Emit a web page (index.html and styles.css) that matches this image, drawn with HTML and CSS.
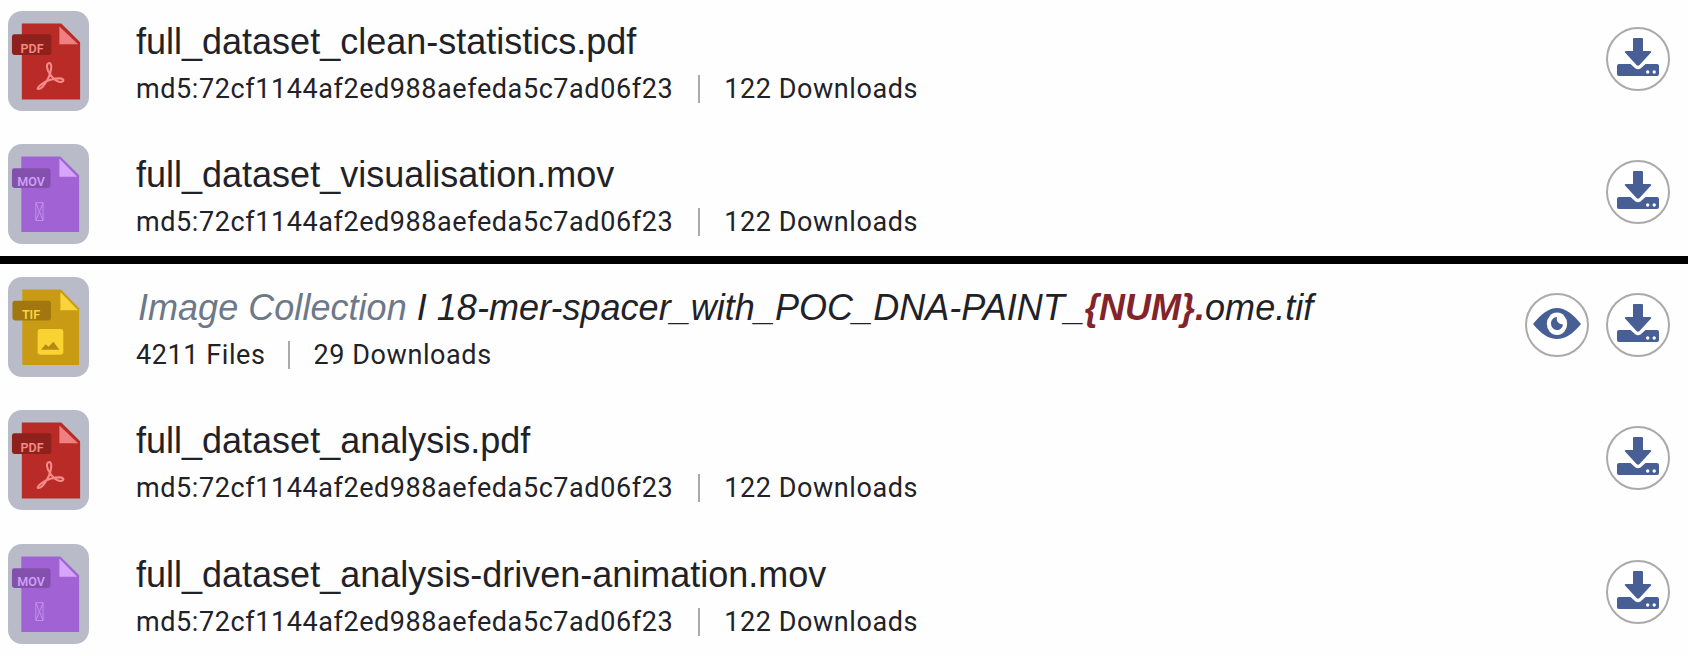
FILE: index.html
```
<!DOCTYPE html>
<html lang="en">
<head>
<meta charset="utf-8">
<title>Files</title>
<link rel="stylesheet" href="styles.css">
</head>
<body>
<svg class="defs" width="0" height="0">
  <symbol id="pdf" viewBox="0 0 82 100">
    <path fill="#b92b27" d="M14 12H54L73 31V89H14Z"/>
    <path fill="#f08080" d="M52 15L71 33H52Z"/>
    <rect x="4" y="23" width="40" height="21" rx="2.5" fill="#8f211c"/>
    <path d="M42 52C38 52 39 59 43 64C47 70 53 73 56 70C57 67 50 67 43 69C36 71 30 76 30 78C33 80 38 73 41 67C44 60 45 53 42 52Z" fill="none" stroke="#f58b87" stroke-width="2.1" stroke-linejoin="round"/>
  </symbol>
  <symbol id="mov" viewBox="0 0 82 100">
    <path fill="#a162d3" d="M13.500 12H53L72 31V88.500H13.500Z"/>
    <path fill="#d6a6fb" d="M52 14L70 32.500H52Z"/>
    <rect x="4" y="24" width="39" height="20" rx="2.500" fill="#8350ad"/>
    <path d="M28.200 58.800H35.500V76.800H28.200ZL35.500 76.800M35.500 58.800L28.200 76.800" fill="none" stroke="#c695ef" stroke-width=".9"/>
  </symbol>
  <symbol id="tif" viewBox="0 0 82 100">
    <path fill="#c99a13" d="M14.500 12H53.500L72 31V88.500H14.500Z"/>
    <path fill="#f8d43c" d="M53 14.500L71 33H53Z"/>
    <rect x="4.500" y="23.500" width="39" height="20" rx="2.500" fill="#a27710"/>
    <rect x="30" y="52" width="26" height="26" rx="2.500" fill="#f8d331"/>
    <path d="M33.500 73L38 67.500L41 70L46 65L52 73Z" fill="#b58a12"/>
  </symbol>
  <symbol id="download" viewBox="0 0 64 64">
    <path fill="#485f96" d="M28 11H36Q37 11 37 12V24H44Q46 24 45 25.500L33.500 38Q32 39.500 30.500 38L19 25.500Q18 24 20 24H27V12Q27 11 28 11Z"/>
    <path fill="#485f96" fill-rule="evenodd" d="M13 37H24.500L29.500 41.500Q32 43 34.500 41.500L39.500 37H51Q53 37 53 39V47Q53 49 51 49H13Q11 49 11 47V39Q11 37 13 37ZM40 45a1.700 1.700 0 1 0 3.400 0a1.700 1.700 0 1 0-3.400 0ZM46.500 45a1.700 1.700 0 1 0 3.400 0a1.700 1.700 0 1 0-3.400 0Z"/>
  </symbol>
  <symbol id="eye" viewBox="0 0 64 64">
    <path fill="#485f96" d="M8 31C16 21 24 15 32 15S48 21 56 31C48 41 40 46 32 46S16 41 8 31Z"/>
    <ellipse cx="32" cy="30.800" rx="10.200" ry="11.200" fill="#fff"/>
    <path fill="#485f96" d="M32 24Q30.500 30.500 38 31.500C37.500 35 35 37 32 37C28.500 37 26 34 26 30.500C26 27 28.500 24.200 32 24Z"/>
  </symbol>
</svg>

<main class="files">
  <article class="row">
    <div class="thumb pdf"><svg><use href="#pdf"/></svg><span class="tag">PDF</span></div>
    <div class="info">
      <h2 class="name">full_dataset_clean-statistics.pdf</h2>
      <div class="meta"><span>md5:72cf1144af2ed988aefeda5c7ad06f23</span><i class="rule"></i><span>122 Downloads</span></div>
    </div>
    <div class="actions"><button class="action" aria-label="Download"><svg><use href="#download"/></svg></button></div>
  </article>
  <article class="row">
    <div class="thumb mov"><svg><use href="#mov"/></svg><span class="tag">MOV</span></div>
    <div class="info">
      <h2 class="name">full_dataset_visualisation.mov</h2>
      <div class="meta"><span>md5:72cf1144af2ed988aefeda5c7ad06f23</span><i class="rule"></i><span>122 Downloads</span></div>
    </div>
    <div class="actions"><button class="action" aria-label="Download"><svg><use href="#download"/></svg></button></div>
  </article>
  <article class="row collection">
    <div class="thumb tif"><svg><use href="#tif"/></svg><span class="tag">TIF</span></div>
    <div class="info">
      <h2 class="name"><em><span class="kind">Image Collection</span> I 18-mer-spacer_with_POC_DNA-PAINT_<b class="num">{NUM}.</b>ome.tif</em></h2>
      <div class="meta"><span>4211 Files</span><i class="rule"></i><span>29 Downloads</span></div>
    </div>
    <div class="actions"><button class="action" aria-label="Preview"><svg><use href="#eye"/></svg></button><button class="action" aria-label="Download"><svg><use href="#download"/></svg></button></div>
  </article>
  <article class="row">
    <div class="thumb pdf"><svg><use href="#pdf"/></svg><span class="tag">PDF</span></div>
    <div class="info">
      <h2 class="name">full_dataset_analysis.pdf</h2>
      <div class="meta"><span>md5:72cf1144af2ed988aefeda5c7ad06f23</span><i class="rule"></i><span>122 Downloads</span></div>
    </div>
    <div class="actions"><button class="action" aria-label="Download"><svg><use href="#download"/></svg></button></div>
  </article>
  <article class="row last">
    <div class="thumb mov"><svg><use href="#mov"/></svg><span class="tag">MOV</span></div>
    <div class="info">
      <h2 class="name">full_dataset_analysis-driven-animation.mov</h2>
      <div class="meta"><span>md5:72cf1144af2ed988aefeda5c7ad06f23</span><i class="rule"></i><span>122 Downloads</span></div>
    </div>
    <div class="actions"><button class="action" aria-label="Download"><svg><use href="#download"/></svg></button></div>
  </article>
</main>
</body>
</html>
```
FILE: styles.css
```
* { box-sizing: border-box; }
body { margin: 0; background: #fefefe; color: #1f2227; }
.defs { display: block; height: 0; }
.files { height: 656px; overflow: hidden; }
.row {
  display: flex;
  align-items: flex-start;
  height: 133px;
  padding: 11px 18px 0 8px;
}
.row:nth-child(2) { height: 123px; }
.row.collection { height: 143px; padding-top: 13px; border-top: 8px solid #000; }
.row.last { padding-top: 12px; }
.thumb {
  position: relative;
  flex: none;
  width: 81px;
  height: 100px;
  border-radius: 14px;
  background: #b9bcc8;
}
.thumb svg { display: block; width: 81px; height: 100px; }
.tag {
  position: absolute;
  top: 30px;
  left: 4px;
  width: 40px;
  text-align: center;
  font: 600 12.5px/16px Roboto, sans-serif;
}
.pdf .tag { color: #f58b87; }
.mov .tag { left: 3px; color: #cf9ff5; }
.tif .tag { left: 3px; color: #f8d43c; }
.info { flex: 1; margin-left: 47px; padding-top: 11px; }
.name {
  margin: 0;
  font: 400 36px/40px "Liberation Sans", Arial, sans-serif;
  white-space: nowrap;
}
.name em { padding-left: 2px; font-style: italic; letter-spacing: .035px; }
.kind { color: #6d7888; }
.num { color: #83232a; font-weight: 700; }
.meta {
  display: flex;
  align-items: center;
  height: 32px;
  margin-top: 11px;
  font: 400 27px/32px Roboto, sans-serif;
  letter-spacing: .58px;
}
.rule { width: 2px; height: 28px; margin: 0 24px 0 25px; background: #aaa; }
.collection .rule { margin: 0 24px 0 22px; }
.actions { display: flex; gap: 17px; margin-top: 16px; }
.action {
  width: 64px;
  height: 64px;
  padding: 0;
  border: 2px solid #aaa;
  border-radius: 50%;
  background: #fff;
}
.action svg { display: block; width: 64px; height: 64px; margin: -2px; }
```
